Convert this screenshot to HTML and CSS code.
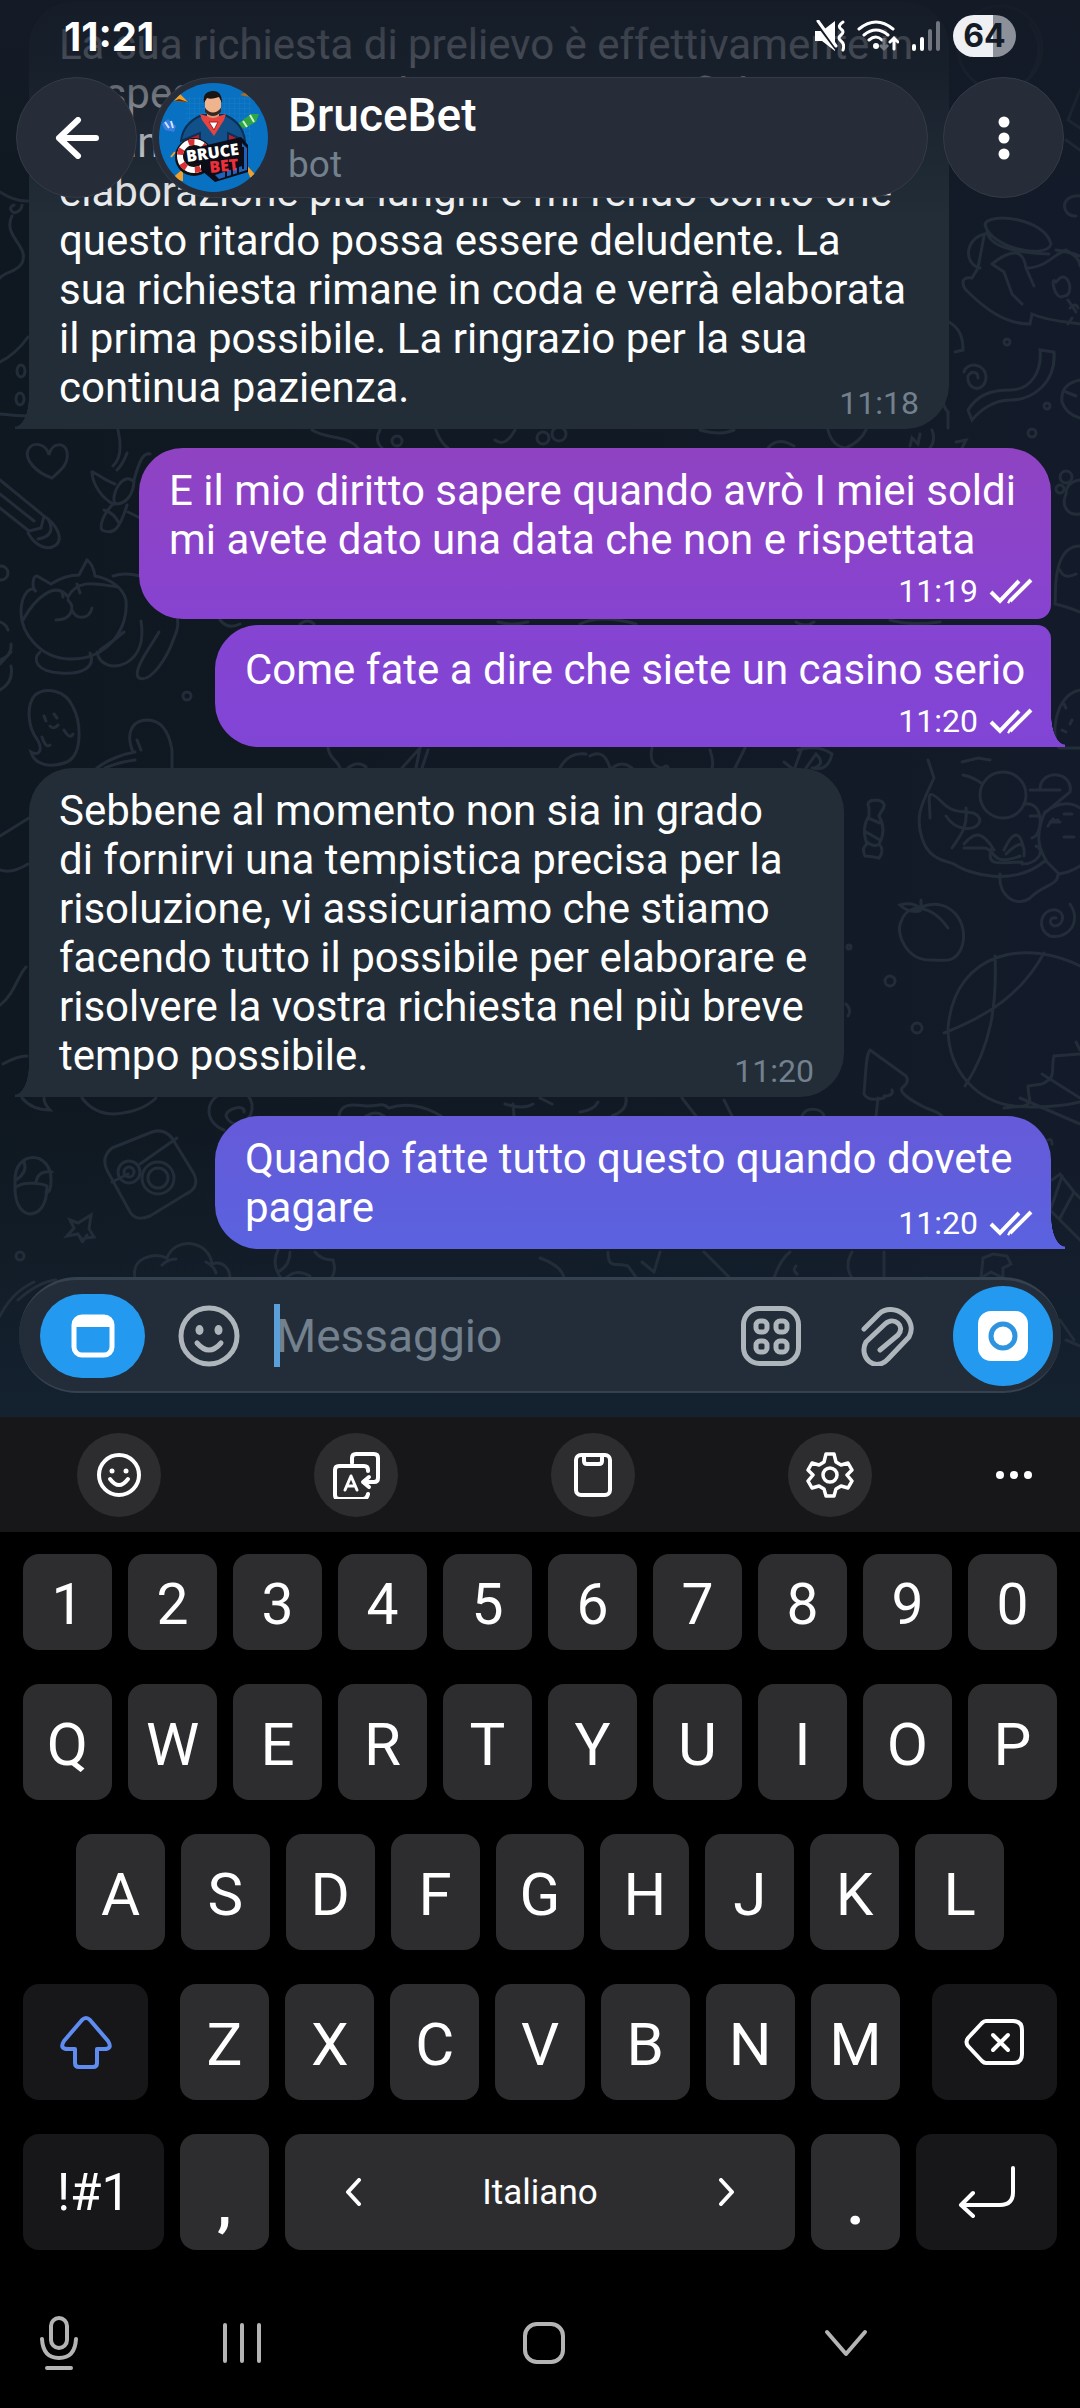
FILE: index.html
```html
<!DOCTYPE html>
<html lang="it">
<head>
  <meta charset="UTF-8">
  <meta name="viewport" content="width=device-width, initial-scale=1.0">
  <title>BruceBet</title>
  <link rel="stylesheet" href="styles.css">
</head>
<body>

  <main class="chat">

    <!-- Wallpaper -->
    <svg class="wallpaper" viewBox="0 0 1080 1417" preserveAspectRatio="xMidYMin slice" aria-hidden="true">
      <!-- left side -->
      <path d="M0 192q16 10 28 9M14 205q-7 3 0 8 8-2 8-8M12 216c-10 20 18 30 10 47-6 10-16 8-22 15M0 362q16-8 28-25M0 414q18 2 28 2"/>
      <ellipse cx="21" cy="371" rx="4" ry="6"/><ellipse cx="20" cy="399" rx="4" ry="6"/>
      <path d="M52 478c-15-5-28-18-24-28 4-9 18-7 21 5 3-14 17-12 18-3 2 12-6 18-15 26z"/>
      <path d="M118 430q6 26-5 36M127 453q-4 11-10 17M0 480l44 36-3 12-12 3-29-23M0 494l34 27M44 516c12 8 20 22 12 29-8 6-20 2-28-12M48 519c6 10 3 18-10 20"/>
      <path d="M115 484c-14-5-25-16-23-11 1 12 10 25 21 31M134 482c-10-12-24 12-19 22 12 0 18-10 19-22zM113 504c-8 8-14 20-11 26 12 6 18-2 25-25M104 510q10 3 15 13M134 480c4-14 8-28 16-26M128 512q8 4 12 6"/>
      <path d="M36 592c-5-6-3-16 1-16l14 8q14-9 28-9l8-15q6 4 8 16c16 3 28 12 31 24 2 26-15 60-57 59-29-1-48-26-48-47 0-20 12-28 15-20zM23 620c12-22 33-40 45-23 10-20 32-12 50-10M62 592l1 5M77 584l3 9M68 600c8 8 3 20-12 20M72 610c4 10 17 10 20-2"/>
      <path d="M40 652c-9 8-2 20 20 21 22 2 36-6 30-20M97 652c2 12 15 18 29 11 14-8 18-24 15-42M159 632c-8 14-28 40-20 46 12 5 28-20 35-40 5-10 4-16 3-24M124 632q-12 10-24 18M113 576q12-4 27 0"/>
      <circle cx="1" cy="573" r="7"/><path d="M0 622q6 2 8 8M0 660q12-4 11-16M0 664l11-12M0 690q14-8 11-24"/>
      <circle cx="187" cy="696" r="4"/>
      <path d="M31 752c4 14 20 16 36 10 16-8 14-40 6-55-8-18-28-20-38-12-10 12-6 34 2 44 6 10 3 18-6 13zM44 716l2 5M54 714l3 4M50 726q4 4 8-1M42 737q4 12 8 8M64 730q6 10 9 4"/>
      <path d="M133 752c-6-14-5-31 14-32 14 0 22 12 25 30v18M97 768c10-8 26-14 38-16M105 768q14-6 30-8M137 740l4 10"/>
      <path d="M0 836l29-18M0 870q12 4 28-6M0 1005c14-10 18-30 26-38M3 1064q14-8 24-8"/>
      <path d="M22 1098q10 12 28 12-6-6-6-12M82 1098q12 16 32 16 28-2 42-16"/>
      <path d="M244 1112c2-8-18-4-18 4 6 14 24 8 26-6 2-16-14-24-28-18-20 8-20 30 0 38"/>
      <path d="M339 1116c2-16 20-10 30-10s12-4 20 2c16-6 36-2 52 8M366 1116q10-6 18 0M505 1104q18 6 28 0M513 1104l1 12-8 8"/>
      <path d="M15 1180c0-30 36-30 36 0 0 14-4 12-5 12M15 1180v8M24 1162q4 10-8 18M52 1172q-14-2-16 10M15 1188c8-8 28-4 32-2 0 20-8 28-18 28-10-2-14-14-14-26z"/>
      <path d="M112 1148l40-16q12-4 20 6l22 36q6 14-8 20l-36 22q-14 6-20-4l-22-40q-8-14 4-24zM112 1182l16-8M140 1164l37-26"/>
      <circle cx="129" cy="1172" r="11"/><circle cx="129" cy="1172" r="5"/><circle cx="158" cy="1178" r="16"/><circle cx="158" cy="1178" r="10"/>
      <path d="M70 1220l8 3 13-8-2 14 5 8-9 1-3 3-4-7-11 2 7-8zM78 1234l5 7 4-6"/>
      <circle cx="20" cy="1256" r="4"/>
      <path d="M135 1278c-4-20 18-26 32-20 8-22 42-18 45 6 12-4 18 6 18 14M162 1265q6-6 14-6M206 1262q8 4 10 11"/>
      <path d="M278 1250c-8 16 2 28 10 36M290 1252q0 14-12 20M315 1252q6 8 18 8 4 12-3 20M286 1278q10-10 24-2"/>
      <path d="M0 1316q12-24 34-34M18 1300q20-18 38-20"/>

      <!-- between bubbles -->
      <path d="M312 430c16 10 34 4 46 18M380 430q-6 10 2 18M436 430q4 12 12 18M495 440q10 8 20-10"/>
      <circle cx="397" cy="441" r="5"/><circle cx="543" cy="438" r="6"/><circle cx="559" cy="434" r="7"/>
      <path d="M700 430q20 6 34 0M768 448q10-12 26-2M828 430q4 16 18 18 14-6 20-18M910 446l2-8 6 6 2-10M932 430q4 10-2 18M956 442l10-2-4 8"/>
      <path d="M220 620q8 10 20 4M300 624q8-6 14 0M498 622q14 4 30 0M580 624q20-10 56 0M796 622q10 6 18 0M890 620q20 6 50 2"/>
      <path d="M328 748c2 12 8 10 12 20M348 768q10-8 18-1M402 768l18-20-4 20M428 750l-6 18M560 768q8-16 26-14M590 756q14-8 20 12M735 768l10-20M652 748c-4 18 8 20 12 20M710 750q4 12 2 18M612 768q10-8 20 0"/>
      <circle cx="666" cy="768" r="2"/>
      <path d="M784 762l10 8 8-22M806 768l10-14q10 10-2 14M798 750q20-6 34 4-4 18-20 14"/>
      <path d="M540 1098l12 6M580 1112q14-2 18-10M612 1116q16-6 14-18M682 1098l14 18M724 1100l8 16M802 1116c4-10 20-8 22 0"/>
      <path d="M540 1258q22 8 24 20M608 1252c0 18 8 10 20 14l10 14M642 1262l12 10 6-20M704 1252l26 26M774 1278q6-18 16-26M852 1252q-8 14 0 26M884 1252v26M796 1266q-4 4 1 8M920 1280q6-4 12 0"/>
      <path d="M983 1258l10-4 14 2 4 8-8 4v10l-12-6-10 6z"/>

      <!-- right side -->
      <circle cx="1000" cy="48" r="42"/><path d="M1030 24q18 24 0 52M1080 90l-12 30 12 8M1066 140l14 10"/>
      <path d="M985 224c4-12 60-6 66 20-4 16-62 4-66-20zM987 232q4 20 62 22M985 234c-20 4-22 30-5 34M984 236l-6 32-6 10c-14-2-8 10-6 12 20 20 40 34 64 34l2-10c18 8 40 8 48 10M992 264l12 8 8 22 10 10M992 264q30-24 34 4l8 18M1026 268c20 0 28-14 40-18 6 4 14 8 14 16M1056 250q14 2 24 6"/>
      <path d="M1056 282c-6-8-2 20 8 14 10 0 6-24-4-18zM1070 308q6-6 8 0M1072 318l-4 6M1068 300l8 12M1080 196c-20-2-20 20-4 20"/>
      <path d="M949 322c10 6 14 14 14 28l-8 2M964 372c2-10 22-10 22 6-2 16-20 12-18-2 4-6 10-4 10 2M1040 350l14 2c2 30-20 48-44 48-16 0-30 10-38 20l-4-10c10-16 24-20 42-20 22 0 32-20 30-40zM946 390q-6 14 2 22v16M1080 380q-20 4-18 22 4 12 18 16M1066 392l10 4"/>
      <circle cx="1007" cy="342" r="3"/><circle cx="1047" cy="406" r="3"/><circle cx="1032" cy="433" r="4"/>
      <circle cx="1066" cy="477" r="6"/><circle cx="1060" cy="489" r="4"/><path d="M1080 480q-14 2-14 14c-6 14 4 22 14 20M1080 546q-14 0-20 16c-6 14-4 30-5 42q10 2 25 8M1060 570q4 10 16 4M1080 690c-30 6-28 58-20 58h20M1064 704l2 4M1072 720l-2 4M1062 730l4 2"/>
      <path d="M928 760l6 18c-10 22-20 36-12 60 6 20 20 22 32 26 14 10 60 24 92-4M930 818c0-20-6-34 14-14 14 14 32 2 36 16-2 12-24 12-34-4M966 808c2 20-6 28-14 40M964 844c10-12 18-14 30 6M964 848h20c12 0 6 20 36 8M963 775q10 2 18 8M990 760l-12-2-16 4M1000 874c-2 22 16 34 30 24 14-14 28-12 28-24M1045 812c-12 26-4 40 2 50l12 12q12-2 21-8M1024 804c20-4 20 30 8 34M1030 790h30M1040 788c2-20 34-16 30 4l-24 20M1045 812q20-14 35-4M1030 816h10M1048 826q8-12 4-4h8M1050 822l8-2M1064 814h8M1064 837h10M1004 850q14-30 20 0M1006 854q20-20 18 2"/>
      <circle cx="1003" cy="795" r="23"/><path d="M992 848c-8 20 10 14 30 14M1022 864c16 0 24-14 14-18"/>
      <path d="M869 808q-4-8 8-8 10 2 6 9-3 4-4 7 8 14 0 28 6 6 0 14-10-2-14-2-4-8 2-12-6-16 2-28zM868 818l12 5M866 832l14 8M867 842q8 6 12 2"/>
      <path d="M921 907c30-12 50 18 40 42-6 12-12 12-28 11-26 2-38-26-32-38 6-20 30-18 47 6M921 909q-8-8-21-4 8 8 20 6M921 908v-8"/>
      <circle cx="890" cy="981" r="5"/><circle cx="917" cy="1028" r="5"/><circle cx="849" cy="947" r="2"/>
      <path d="M1056 918c-6-2-8 6-2 8 10 0 12-14 2-16-16-2-20 20-6 26 18 4 32-14 20-32"/>
      <path d="M1080 966c-50-26-125-18-132 62 0 46 32 74 66 78 26 2 50 0 66-4M995 956c2 50-4 90-30 130M1044 953c-22 40-54 62-100 80M1080 1054l-26 2c-4 16 4 20-12 28l-14 2c0 14 6 16-4 20l-20 2M1042 1074l38 24M1020 1098l60 26M1076 1042l4 8"/>
      <path d="M870 1050l36 26q4 6-4 12-4 6 24 20 12 4 16 8M870 1050c-4 4-4 20-6 44q4 8 20 4M878 1098l-2 18M884 1096q10 0 8-6M846 1004q6 6 2 12"/>
      <path d="M1052 1180l8-6 14 18-14 26M1062 1176q-10 30-12 34l30 30M1074 1192l6 6M1048 1140q4-2 4 4"/>
      <path d="M1060 1320l14 20M1066 1340l14 6"/>
    </svg>

    <!-- Messages -->
    <section class="messages">
      <article class="bubble incoming has-tail wide-1">
        <p class="text">La sua richiesta di prelievo è effettivamente in<br>sospeso a causa di numerose verifiche e<br>alcuni casi possono avere tempi di<br>elaborazione più lunghi e mi rendo conto che<br>questo ritardo possa essere deludente. La<br>sua richiesta rimane in coda e verrà elaborata<br>il prima possibile. La ringrazio per la sua<br>continua pazienza.</p>
        <div class="meta"><time>11:18</time></div>
      </article>

      <article class="bubble outgoing purple group-start wide-2">
        <p class="text">E il mio diritto sapere quando avrò I miei soldi<br>mi avete dato una data che non e rispettata</p>
        <div class="meta below"><time>11:19</time>
          <svg class="checks" viewBox="0 0 44 26"><path d="M2 14l9 9L30 3M21 23L42 2M19 23l2 1"/></svg>
        </div>
      </article>

      <article class="bubble outgoing violet has-tail group-end wide-3">
        <p class="text">Come fate a dire che siete un casino serio</p>
        <div class="meta below"><time>11:20</time>
          <svg class="checks" viewBox="0 0 44 26"><path d="M2 14l9 9L30 3M21 23L42 2M19 23l2 1"/></svg>
        </div>
      </article>

      <article class="bubble incoming has-tail wide-4">
        <p class="text">Sebbene al momento non sia in grado<br>di fornirvi una tempistica precisa per la<br>risoluzione, vi assicuriamo che stiamo<br>facendo tutto il possibile per elaborare e<br>risolvere la vostra richiesta nel più breve<br>tempo possibile.</p>
        <div class="meta"><time>11:20</time></div>
      </article>

      <article class="bubble outgoing blue has-tail wide-3">
        <p class="text">Quando fatte tutto questo quando dovete<br>pagare</p>
        <div class="meta"><time>11:20</time>
          <svg class="checks" viewBox="0 0 44 26"><path d="M2 14l9 9L30 3M21 23L42 2M19 23l2 1"/></svg>
        </div>
      </article>
    </section>

    <!-- Composer -->
    <form class="composer">
      <button type="button" class="app-btn" aria-label="Apri app">
        <svg viewBox="0 0 44 44" width="44" height="44"><rect x="3" y="3" width="38" height="38" rx="8" fill="none" stroke="#fff" stroke-width="5"/><path d="M3 12q0-9 9-9h20q9 0 9 9v1H3z" fill="#fff"/></svg>
      </button>
      <button type="button" class="icon-btn emoji-btn" aria-label="Emoji">
        <svg viewBox="0 0 62 62" width="62" height="62"><g fill="none" stroke="#aeb6bc" stroke-width="5" stroke-linecap="round"><circle cx="31" cy="31" r="28"/><path d="M19 38q12 14 24 0"/></g><ellipse cx="21.500" cy="25" rx="4" ry="5" fill="#aeb6bc"/><ellipse cx="40.500" cy="25" rx="4" ry="5" fill="#aeb6bc"/></svg>
      </button>
      <input class="message-input" type="text" placeholder="Messaggio" aria-label="Messaggio">
      <button type="button" class="icon-btn" aria-label="Comandi">
        <svg viewBox="0 0 60 60" width="60" height="60"><g fill="none" stroke="#aeb6bc" stroke-width="5"><rect x="2.500" y="2.500" width="55" height="55" rx="16"/><rect x="15" y="15" width="11" height="11" rx="4"/><rect x="35" y="15" width="11" height="11" rx="4"/><rect x="15" y="35" width="11" height="11" rx="4"/><rect x="35" y="35" width="11" height="11" rx="4"/></g></svg>
      </button>
      <button type="button" class="icon-btn clip-btn" aria-label="Allega">
        <svg viewBox="0 0 60 60" width="60" height="60"><path d="M6 23L21 8C35-5 61 13 51 31L30 53C17 67 0 51 8 36L27 18C36 10 48 20 40 29L22 44" fill="none" stroke="#aeb6bc" stroke-width="5" stroke-linecap="round" stroke-linejoin="round"/></svg>
      </button>
      <button type="button" class="camera-btn" aria-label="Videomessaggio">
        <svg viewBox="0 0 50 50" width="50" height="50"><rect width="50" height="50" rx="13" fill="#fff"/><circle cx="25" cy="25" r="12" fill="#fff" stroke="#2e94e0" stroke-width="5"/></svg>
      </button>
    </form>

    <!-- Status bar and chat header -->
    <div class="top-overlay">
      <div class="status-bar">
        <span class="clock">11:21</span>
        <div class="status-icons">
          <svg viewBox="0 0 30 32" width="30" height="32"><path d="M0 11h7L20 1v30L7 21H0z" fill="#fff"/><path d="M0 1l22 29" stroke="#141b27" stroke-width="3"/><path d="M3 1l18 25" stroke="#fff" stroke-width="3" stroke-linecap="round"/><path d="M28 2q-6 4-2 7t0 6 0 6 2 9" fill="none" stroke="#fff" stroke-width="3" stroke-linecap="round"/></svg>
          <svg viewBox="0 0 42 32" width="42" height="32"><g fill="none" stroke="#fff" stroke-width="3" stroke-linecap="round"><path d="M2 9q17-14 34 0M7 15q12-10 24 0M12 20q7-6 13 0"/><path d="M37 29V19M33 22l4-4 4 4"/></g><path d="M27 18v10M23 25l4 4 4-4" fill="none" stroke="#70757e" stroke-width="3"/><circle cx="19" cy="26" r="3" fill="#fff"/></svg>
          <svg viewBox="0 0 30 30" width="30" height="30"><g stroke-width="4" stroke-linecap="round"><path d="M3 25v3M11 18v10" stroke="#fff"/><path d="M19 10v18M27 2v26" stroke="#70757e"/></g></svg>
          <span class="battery">64</span>
        </div>
      </div>

      <header class="chat-header">
        <button type="button" class="round-btn" aria-label="Indietro">
          <svg viewBox="0 0 44 42" width="44" height="42"><path d="M41 21H4M23 3L4 21l19 18" fill="none" stroke="#fff" stroke-width="6" stroke-linecap="round" stroke-linejoin="round"/></svg>
        </button>

        <div class="title-pill">
          <svg class="avatar" viewBox="0 0 109 109" role="img" aria-label="BruceBet">
            <defs>
              <clipPath id="avatarClip"><circle cx="54.500" cy="54.500" r="54.500"/></clipPath>
              <pattern id="grid" width="5" height="5" patternUnits="userSpaceOnUse"><path d="M5 0H0V5" fill="none" stroke="#3a8fc8" stroke-width="1"/></pattern>
            </defs>
            <g clip-path="url(#avatarClip)">
              <rect width="109" height="109" fill="#0871c2"/>
              <rect x="26" y="14" width="66" height="44" fill="url(#grid)" opacity=".4"/>
              <path d="M15 18l6-7 8 8z" fill="#f0a02c"/><path d="M15 18l14 1-9-3z" fill="#5a3110"/>
              <path d="M81 12l6-3 3 5z" fill="#b06a1c"/>
              <path d="M3 41l6-5 8 7-2 6-9-2z" fill="#3a7fe0"/><path d="M6 39l4 6M12 38l2 7" stroke="#cfe2ff" stroke-width="2"/>
              <path d="M80 40l12-9 8 0-3 8-11 6-6-1z" fill="#2fa544"/><path d="M84 38l4 6M91 32l4 7" stroke="#c9f5c4" stroke-width="2"/>
              <!-- cape and body -->
              <path d="M27 57l10-14h34l12 14-4 8H30z" fill="#b71f2b"/>
              <path d="M22 58q2-18 21-26h23q18 8 20 26l-17-8v20H41V50z" fill="#12508a" stroke="#0b2f57" stroke-width="2"/>
              <path d="M41 31q13 5 26 0l-2 6-10 16-12-16z" fill="#e8443f"/>
              <path d="M50 39h9l-4 8z" fill="#fff" stroke="#a61c22" stroke-width="1"/>
              <!-- head -->
              <path d="M48 25h12v8q-6 4-12 0z" fill="#d99a76"/>
              <path d="M46 14h16v10q-2 8-8 8t-8-8z" fill="#efb38e"/>
              <path d="M46 25q8 9 16 0v4q-8 8-16 0z" fill="#3a2620"/>
              <path d="M45 20q-2-11 8-12 10-1 10 12l-3-6q-8 3-12 1z" fill="#191515"/>
              <!-- logo block -->
              <path d="M12 74l4-5M15 95l8-7 0 9zM88 84l8 9-4 1z" stroke="#f0a02c" fill="#f0a02c" stroke-width="2"/>
              <circle cx="35" cy="74" r="19" fill="#111"/>
              <circle cx="35" cy="73" r="14" fill="none" stroke="#fff" stroke-width="6"/>
              <circle cx="35" cy="73" r="14" fill="none" stroke="#dc2f35" stroke-width="6" stroke-dasharray="6 9"/>
              <path d="M27 67l55-13 7 8v27l-33 10-14-12V80H27z" fill="#0a0d18"/>
              <path d="M83 60l5 5v22l-28 9-4-4 27-9z" fill="#1e63b8"/>
              <path d="M84 64v22M79 84v6M73 86v6M67 88v6" stroke="#0a0d18" stroke-width="2"/>
              <text class="logo-white" transform="rotate(-8 28 79)" x="28" y="79">BRUCE</text>
              <text class="logo-red" transform="rotate(-6 51 89)" x="51" y="90">BET</text>
            </g>
          </svg>
          <div class="title-text">
            <h1>BruceBet</h1>
            <p>bot</p>
          </div>
        </div>

        <button type="button" class="round-btn" aria-label="Altre opzioni">
          <svg viewBox="0 0 12 44" width="12" height="44" fill="#fff"><circle cx="6" cy="6" r="5.500"/><circle cx="6" cy="22" r="5.500"/><circle cx="6" cy="38" r="5.500"/></svg>
        </button>
      </header>
    </div>
  </main>

  <!-- Keyboard -->
  <section class="keyboard" aria-label="Tastiera">
    <div class="toolbar">
      <div class="tools">
        <button type="button" class="tool" aria-label="Emoji">
          <svg viewBox="0 0 48 48" width="48" height="48"><g fill="none" stroke="#fff" stroke-width="4" stroke-linecap="round"><circle cx="24" cy="24" r="20"/><path d="M15 28q9 12 18 0"/></g><circle cx="17" cy="20" r="2.500" fill="#fff"/><circle cx="31" cy="20" r="2.500" fill="#fff"/></svg>
        </button>
        <button type="button" class="tool" aria-label="Traduci">
          <svg viewBox="0 0 48 48" width="48" height="48" fill="none" stroke="#fff" stroke-width="4" stroke-linecap="round" stroke-linejoin="round"><path d="M20 12V7q0-4 4-4h18q4 0 4 4v20q0 4-4 4H32M37 26l-6 5 6 5"/><path d="M36 20v-1q0-4-4-4H7q-4 0-4 4v25q0 4 4 4h24q4 0 5-5"/><path d="M13 39l6-14 6 14M15 35h8" stroke-width="3"/></svg>
        </button>
        <button type="button" class="tool" aria-label="Appunti">
          <svg viewBox="0 0 48 48" width="48" height="48" fill="none" stroke="#fff" stroke-width="4" stroke-linejoin="round"><rect x="7" y="4" width="34" height="40" rx="5"/><path d="M15 5v5q0 3 3 3h12q3 0 3-3V5"/></svg>
        </button>
        <button type="button" class="tool" aria-label="Impostazioni">
          <svg viewBox="0 0 48 48" width="48" height="48" fill="none" stroke="#fff" stroke-width="3.500" stroke-linejoin="round"><path d="M20 3h8l2 8 5 3 7-2 4 7-5 5 5 6-4 7-7-2-5 3-2 7h-8l-2-7-5-3-7 2-4-7 5-6-5-5 4-7 7 2 5-3z"/><circle cx="24" cy="24" r="7"/></svg>
        </button>
      </div>
      <button type="button" class="more" aria-label="Altro">
        <svg viewBox="0 0 38 10" width="38" height="10" fill="#fff"><circle cx="5" cy="5" r="4"/><circle cx="19" cy="5" r="4"/><circle cx="33" cy="5" r="4"/></svg>
      </button>
    </div>

    <div class="keys">
      <div class="key-row numbers">
        <button type="button" class="key">1</button>
        <button type="button" class="key">2</button>
        <button type="button" class="key">3</button>
        <button type="button" class="key">4</button>
        <button type="button" class="key">5</button>
        <button type="button" class="key">6</button>
        <button type="button" class="key">7</button>
        <button type="button" class="key">8</button>
        <button type="button" class="key">9</button>
        <button type="button" class="key">0</button>
      </div>
      <div class="key-row">
        <button type="button" class="key">Q</button>
        <button type="button" class="key">W</button>
        <button type="button" class="key">E</button>
        <button type="button" class="key">R</button>
        <button type="button" class="key">T</button>
        <button type="button" class="key">Y</button>
        <button type="button" class="key">U</button>
        <button type="button" class="key">I</button>
        <button type="button" class="key">O</button>
        <button type="button" class="key">P</button>
      </div>
      <div class="key-row home-row">
        <button type="button" class="key">A</button>
        <button type="button" class="key">S</button>
        <button type="button" class="key">D</button>
        <button type="button" class="key">F</button>
        <button type="button" class="key">G</button>
        <button type="button" class="key">H</button>
        <button type="button" class="key">J</button>
        <button type="button" class="key">K</button>
        <button type="button" class="key">L</button>
      </div>
      <div class="key-row">
        <button type="button" class="key dark shift" aria-label="Maiuscole">
          <svg viewBox="0 0 52 54" width="52" height="54"><path d="M22 5q4-4 8 0l18 21q5 8-4 8h-7v14q0 4-4 4H19q-4 0-4-4V34H8q-9 0-4-8z" fill="none" stroke="#5f8cf0" stroke-width="4" stroke-linejoin="round"/></svg>
        </button>
        <button type="button" class="key">Z</button>
        <button type="button" class="key">X</button>
        <button type="button" class="key">C</button>
        <button type="button" class="key">V</button>
        <button type="button" class="key">B</button>
        <button type="button" class="key">N</button>
        <button type="button" class="key">M</button>
        <button type="button" class="key dark backspace" aria-label="Cancella">
          <svg viewBox="0 0 60 46" width="60" height="46" fill="none" stroke="#fff" stroke-width="4" stroke-linecap="round" stroke-linejoin="round"><path d="M22 2h27q9 0 9 9v24q0 9-9 9H22q-2 0-4-2L4 27q-3-4 0-8L18 4q2-2 4-2z"/><path d="M29 16l15 15M44 16L29 31"/></svg>
        </button>
      </div>
      <div class="key-row">
        <button type="button" class="key dark symbols">!#1</button>
        <button type="button" class="key punctuation">,</button>
        <button type="button" class="key space">
          <svg viewBox="0 0 16 28" width="16" height="28"><path d="M14 2L3 14l11 12" fill="none" stroke="#fff" stroke-width="4" stroke-linecap="round" stroke-linejoin="round"/></svg>
          <span>Italiano</span>
          <svg viewBox="0 0 16 28" width="16" height="28"><path d="M2 2l11 12L2 26" fill="none" stroke="#fff" stroke-width="4" stroke-linecap="round" stroke-linejoin="round"/></svg>
        </button>
        <button type="button" class="key punctuation">.</button>
        <button type="button" class="key dark enter" aria-label="Invio">
          <svg viewBox="0 0 58 52" width="58" height="52"><path d="M55 2v24q0 13-13 13H4M15 27L3 39l12 11" fill="none" stroke="#fff" stroke-width="4" stroke-linecap="round" stroke-linejoin="round"/></svg>
        </button>
      </div>
    </div>

    <nav class="nav-bar">
      <button type="button" class="nav-btn mic" aria-label="Input vocale">
        <svg viewBox="0 0 40 54" width="40" height="54" fill="none" stroke="#b4b4b4" stroke-width="4" stroke-linecap="round"><rect x="12" y="2" width="16" height="30" rx="8"/><path d="M3 23q1 19 17 19t17-19M8 52h24"/></svg>
      </button>
      <button type="button" class="nav-btn" aria-label="Recenti">
        <svg viewBox="0 0 40 42" width="40" height="42" stroke="#b4b4b4" stroke-width="4" stroke-linecap="round"><path d="M3 3v36M20 3v36M37 3v36"/></svg>
      </button>
      <button type="button" class="nav-btn" aria-label="Home">
        <svg viewBox="0 0 44 44" width="44" height="44"><rect x="3" y="3" width="38" height="38" rx="12" fill="none" stroke="#b4b4b4" stroke-width="4"/></svg>
      </button>
      <button type="button" class="nav-btn" aria-label="Chiudi tastiera">
        <svg viewBox="0 0 44 28" width="44" height="28"><path d="M3 3l19 22L41 3" fill="none" stroke="#b4b4b4" stroke-width="4" stroke-linecap="round" stroke-linejoin="round"/></svg>
      </button>
    </nav>
  </section>

</body>
</html>
```

FILE: styles.css
```css
:root {
  --glass: #262c38;
  --glass-border: #343b47;
  --incoming: #222d38;
  --accent: #2399ef;
  --muted: #73808d;
  --key: #2d2d2f;
  --key-dark: #171719;
}

* {
  box-sizing: border-box;
}

body {
  margin: 0;
  background: #000;
  color: #fff;
  font-family: Roboto, "Liberation Sans", sans-serif;
}

h1,
p {
  margin: 0;
}

button {
  display: flex;
  align-items: center;
  justify-content: center;
  padding: 0;
  border: none;
  background: none;
  color: inherit;
  font-family: inherit;
  cursor: pointer;
}

svg {
  display: block;
  flex-shrink: 0;
}

/* Chat */
.chat {
  position: relative;
  overflow: hidden;
  padding-bottom: 24px;
  background: linear-gradient(180deg, rgba(20, 34, 48, 0) 78%, #14212f 100%),
    linear-gradient(90deg, #0f1820 0%, #111924 45%, #131a29 100%);
}

.wallpaper {
  position: absolute;
  inset: 0;
  width: 100%;
  height: 100%;
  fill: none;
  stroke: #232d39;
  stroke-width: 3;
  stroke-linecap: round;
}

.messages {
  position: relative;
  display: flex;
  flex-direction: column;
  padding: 2px 29px 28px;
}

.bubble {
  position: relative;
  display: grid;
  width: 100%;
  margin-bottom: 19px;
  padding: 18px 30px 8px;
  border-radius: 44px;
}

.bubble:last-child {
  margin-bottom: 0;
}

.wide-1 { max-width: 920px; }
.wide-2 { max-width: 912px; }
.wide-3 { max-width: 836px; }
.wide-4 { max-width: 815px; }

.text {
  grid-area: 1 / 1;
  margin-bottom: 9px;
  font-size: 42px;
  line-height: 49px;
  white-space: nowrap;
}

.meta {
  grid-area: 1 / 1;
  align-self: end;
  justify-self: end;
  display: flex;
  align-items: center;
  gap: 11px;
  font-size: 32px;
  line-height: 36px;
}

.meta.below {
  grid-area: 2 / 1;
}

.checks {
  width: 44px;
  height: 26px;
  fill: none;
  stroke: #fff;
  stroke-width: 4;
}

.incoming {
  align-self: flex-start;
  background: var(--incoming);
}

.incoming .meta {
  color: var(--muted);
}

.outgoing {
  align-self: flex-end;
  padding-right: 18px;
}

.purple { background: linear-gradient(#8f43c2, #8743d0); }
.violet { background: linear-gradient(#8544d1, #8145d6); }
.blue { background: linear-gradient(#665ad9, #5a62df); }

.group-start {
  margin-bottom: 6px;
  padding-bottom: 10px;
  border-bottom-right-radius: 14px;
}

.group-end {
  margin-bottom: 21px;
  padding-top: 20px;
  border-top-right-radius: 14px;
}

/* Bubble tails */
.has-tail::after {
  content: "";
  position: absolute;
  bottom: 0;
  width: 14px;
  height: 32px;
}

.incoming.has-tail {
  border-bottom-left-radius: 0;
}

.incoming.has-tail::after {
  right: 100%;
  background: radial-gradient(ellipse 14px 30px at 0 0, transparent 97%, var(--incoming) 100%);
}

.outgoing.has-tail {
  border-bottom-right-radius: 0;
}

.outgoing.has-tail::after {
  left: 100%;
}

.violet::after {
  background: radial-gradient(ellipse 14px 30px at 100% 0, transparent 97%, #8145d6 100%);
}

.blue::after {
  background: radial-gradient(ellipse 14px 30px at 100% 0, transparent 97%, #5a62df 100%);
}

/* Composer */
.composer {
  position: relative;
  display: flex;
  align-items: center;
  height: 116px;
  margin: 0 19px;
  padding: 0 8px 0 21px;
  border: solid #35414e;
  border-width: 3px 0 2px;
  border-radius: 58px;
  background: #222d39;
}

.app-btn {
  flex-shrink: 0;
  width: 105px;
  height: 84px;
  border-radius: 42px;
  background: var(--accent);
}

.icon-btn {
  flex-shrink: 0;
}

.emoji-btn {
  margin: 0 34px 0 33px;
}

.message-input {
  flex: 1;
  min-width: 0;
  height: 63px;
  padding: 0;
  border: none;
  border-left: 6px solid #5b9fd8;
  outline: none;
  background: none;
  color: #fff;
  font-family: inherit;
  font-size: 46px;
  text-indent: -4px;
}

.message-input::placeholder {
  color: var(--muted);
  opacity: 1;
}

.clip-btn {
  margin: 0 35px 0 57px;
}

.camera-btn {
  flex-shrink: 0;
  width: 100px;
  height: 100px;
  border-radius: 50%;
  background: var(--accent);
}

/* Status bar and header float over the messages */
.top-overlay {
  position: absolute;
  top: 0;
  left: 0;
  right: 0;
  padding-bottom: 22px;
  background: linear-gradient(rgba(20, 27, 39, 0.9) 0, rgba(20, 27, 39, 0.78) 30%, rgba(20, 27, 39, 0.4) 60%, rgba(20, 27, 39, 0) 100%);
}

.status-bar {
  display: flex;
  align-items: center;
  justify-content: space-between;
  height: 77px;
  padding: 0 64px 5px;
}

.clock {
  font-family: Inter, Roboto, sans-serif;
  font-size: 40px;
  font-weight: 700;
}

.status-icons {
  display: flex;
  align-items: center;
  gap: 12px;
}

.battery {
  width: 63px;
  border-radius: 21px;
  background: linear-gradient(90deg, #eef0f3 63%, #8c9098 63%);
  color: #141b27;
  font-family: Inter, Roboto, sans-serif;
  font-size: 32px;
  font-weight: 700;
  line-height: 42px;
  text-align: center;
}

.chat-header {
  display: flex;
  gap: 15px;
  padding: 0 16px;
}

.round-btn {
  flex-shrink: 0;
  width: 121px;
  height: 121px;
  border: 1px solid var(--glass-border);
  border-radius: 50%;
  background: var(--glass);
}

.title-pill {
  flex: 1;
  display: flex;
  align-items: center;
  gap: 20px;
  padding-left: 6px;
  border: 1px solid var(--glass-border);
  border-radius: 61px;
  background: var(--glass);
}

.avatar {
  width: 109px;
  height: 109px;
}

.logo-white,
.logo-red {
  font-family: "Open Sans", sans-serif;
  font-weight: 800;
}

.logo-white {
  fill: #fff;
  font-size: 16px;
}

.logo-red {
  fill: #ee2f38;
  font-size: 16px;
}

.title-text h1 {
  font-size: 46px;
  font-weight: 500;
  line-height: 54px;
}

.title-text p {
  color: var(--muted);
  font-size: 37px;
  line-height: 46px;
}

/* Keyboard */
.toolbar {
  display: flex;
  align-items: center;
  justify-content: space-between;
  height: 115px;
  padding: 0 24px 0 77px;
  background: #171719;
}

.tools {
  display: flex;
  gap: 153px;
}

.tool,
.more {
  width: 84px;
  height: 84px;
  border-radius: 50%;
}

.tool {
  background: var(--key);
}

.keys {
  display: flex;
  flex-direction: column;
  gap: 34px;
  padding: 22px 23px 0;
}

.key-row {
  display: flex;
  gap: 16px;
}

.home-row {
  padding: 0 53px;
}

.key {
  flex: 1;
  height: 116px;
  padding-top: 4px;
  border-radius: 16px;
  background: var(--key);
  font-size: 60px;
}

.numbers .key {
  height: 96px;
  font-size: 57px;
}

.dark {
  padding-top: 0;
  background: var(--key-dark);
}

.shift,
.backspace {
  flex: 0 0 125px;
}

.shift {
  margin-right: 16px;
}

.backspace {
  margin-left: 16px;
}

.symbols,
.enter {
  flex: 0 0 141px;
}

.symbols {
  font-size: 51px;
}

.punctuation {
  flex: 0 0 89px;
  padding-top: 22px;
  font-weight: 700;
}

.space {
  justify-content: space-between;
  padding: 0 60px;
  font-size: 35px;
}

/* Navigation bar */
.nav-bar {
  display: flex;
  gap: 242px;
  padding: 63px 29px 35px;
}

.nav-btn {
  width: 60px;
  height: 60px;
}

.mic {
  margin-right: -119px;
}
```
